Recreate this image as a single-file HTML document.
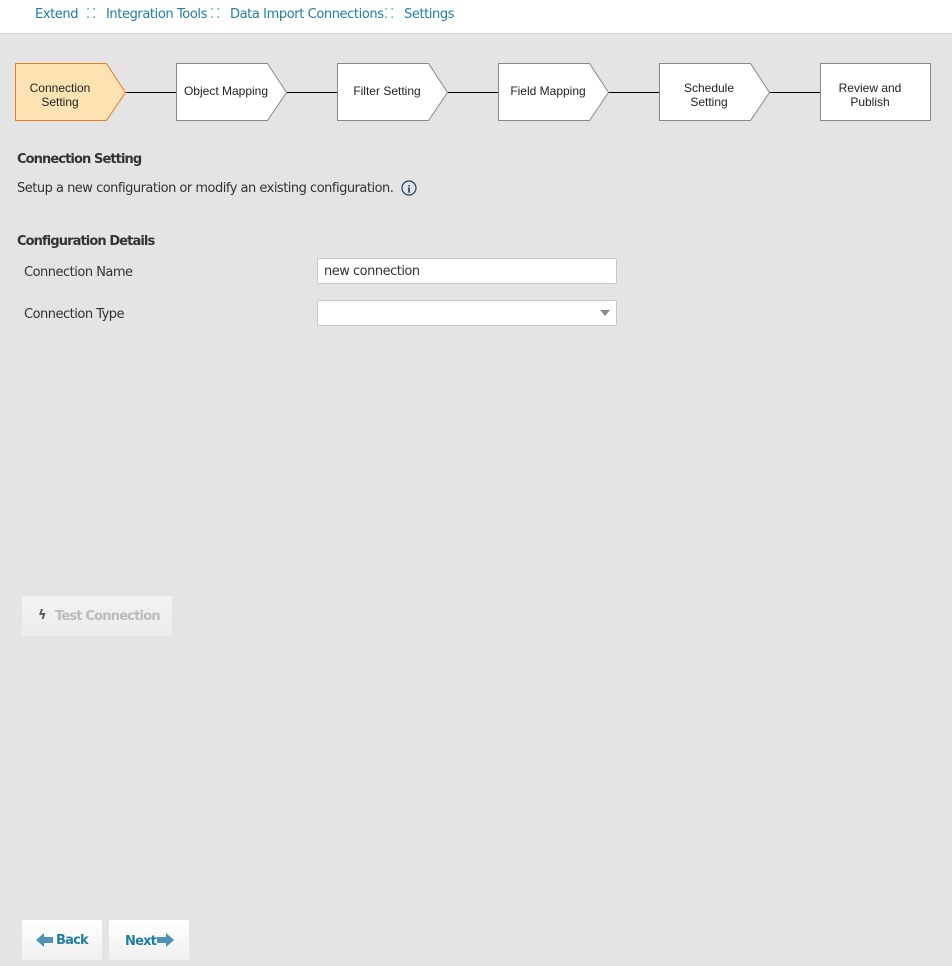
<!DOCTYPE html>
<html><head><meta charset="utf-8"><style>
body{margin:0;width:952px;height:966px;background:#e4e4e4;font-family:"DejaVu Sans","Liberation Sans",sans-serif;position:relative;overflow:hidden;color:#333}
.hdr{position:absolute;left:0;top:0;width:952px;height:33px;background:#fff;border-bottom:1px solid #d4d4d4}
.bc{position:absolute;top:7px;font-size:13px;color:#1f7ea1;letter-spacing:-0.4px}
.t{position:absolute;font-size:13px;letter-spacing:-0.5px}
.b{font-weight:bold;letter-spacing:-0.9px}
.inp{position:absolute;left:317px;width:298px;height:24px;background:#fff;border:1px solid #c8c8c8;border-radius:2px;font-size:13px;box-sizing:content-box}
.btn{position:absolute;background:linear-gradient(#fff,#f0f0f0);font-weight:bold;font-size:13px;color:#1f7ea1;letter-spacing:-0.8px}
</style></head><body>
<div class="hdr"></div>
<div class="bc" style="left:35px">Extend</div>
<div class="bc" style="left:86px;color:#3aa0c0;letter-spacing:2px">⁚⁚</div>
<div class="bc" style="left:106px">Integration Tools</div>
<div class="bc" style="left:210px;color:#3aa0c0;letter-spacing:2px">⁚⁚</div>
<div class="bc" style="left:230px">Data Import Connections</div>
<div class="bc" style="left:384px;color:#3aa0c0;letter-spacing:2px">⁚⁚</div>
<div class="bc" style="left:404px">Settings</div>

<svg style="position:absolute;left:0;top:0" width="952" height="130" font-family="Liberation Sans, Arial, sans-serif" font-size="12" fill="#222">
<g stroke="#000" stroke-width="1">
<line x1="125" y1="92.5" x2="176" y2="92.5"/><line x1="286" y1="92.5" x2="337" y2="92.5"/><line x1="447" y1="92.5" x2="498" y2="92.5"/><line x1="608" y1="92.5" x2="659" y2="92.5"/><line x1="769" y1="92.5" x2="820" y2="92.5"/>
</g>
<polygon points="15.5,63.5 106.5,63.5 125.5,92.5 106.5,120.5 15.5,120.5" fill="#fde3b2" stroke="#f07c1c"/>
<polygon points="176.5,63.5 267.5,63.5 286.5,92.5 267.5,120.5 176.5,120.5" fill="#fff" stroke="#888"/>
<polygon points="337.5,63.5 428.5,63.5 447.5,92.5 428.5,120.5 337.5,120.5" fill="#fff" stroke="#888"/>
<polygon points="498.5,63.5 589.5,63.5 608.5,92.5 589.5,120.5 498.5,120.5" fill="#fff" stroke="#888"/>
<polygon points="659.5,63.5 750.5,63.5 769.5,92.5 750.5,120.5 659.5,120.5" fill="#fff" stroke="#888"/>
<rect x="820.5" y="63.5" width="110" height="57" fill="#fff" stroke="#888"/>
<g text-anchor="middle">
<text x="60" y="92">Connection</text><text x="60" y="106">Setting</text>
<text x="226" y="95">Object Mapping</text>
<text x="387" y="95">Filter Setting</text>
<text x="548" y="95">Field Mapping</text>
<text x="709" y="92">Schedule</text><text x="709" y="106">Setting</text>
<text x="870" y="92">Review and</text><text x="870" y="106">Publish</text>
</g></svg>

<div class="t b" style="left:17px;top:152px">Connection Setting</div>
<div class="t" style="left:17px;top:181px">Setup a new configuration or modify an existing configuration.</div>
<svg style="position:absolute;left:401px;top:180px" width="16" height="16"><circle cx="8" cy="8" r="7" fill="#dfe6f0" stroke="#2a3a5a" stroke-width="1.2"/><text x="8" y="12.5" text-anchor="middle" font-family="Liberation Serif,serif" font-weight="bold" font-size="11" fill="#1a2a4a">i</text></svg>
<div class="t b" style="left:17px;top:234px">Configuration Details</div>
<div class="t" style="left:24px;top:265px">Connection Name</div>
<div class="t" style="left:24px;top:307px">Connection Type</div>
<div class="inp" style="top:258px"><span style="position:absolute;left:6px;top:5px;letter-spacing:-0.5px">new connection</span></div>
<div class="inp" style="top:300px"><span style="position:absolute;right:6px;top:9px;width:0;height:0;border-left:5px solid transparent;border-right:5px solid transparent;border-top:6px solid #888"></span></div>

<div class="btn" style="left:22px;top:596px;width:150px;height:40px;background:linear-gradient(#f3f3f3,#ececec);color:#bbb"><span style="position:absolute;left:16px;top:12px;color:#555">ϟ</span><span style="position:absolute;left:33px;top:13px">Test Connection</span></div>

<div class="btn" style="left:22px;top:920px;width:80px;height:40px"><svg style="position:absolute;left:14px;top:12px" width="18" height="16"><polygon points="0,8 8,1 8,5 17,5 17,11 8,11 8,15" fill="#4f94b8"/></svg><span style="position:absolute;left:34px;top:13px">Back</span></div>
<div class="btn" style="left:109px;top:920px;width:80px;height:40px"><span style="position:absolute;left:16px;top:14px">Next</span><svg style="position:absolute;left:48px;top:12px" width="18" height="16"><polygon points="17,8 9,1 9,5 0,5 0,11 9,11 9,15" fill="#4f94b8"/></svg></div>
</body></html>
